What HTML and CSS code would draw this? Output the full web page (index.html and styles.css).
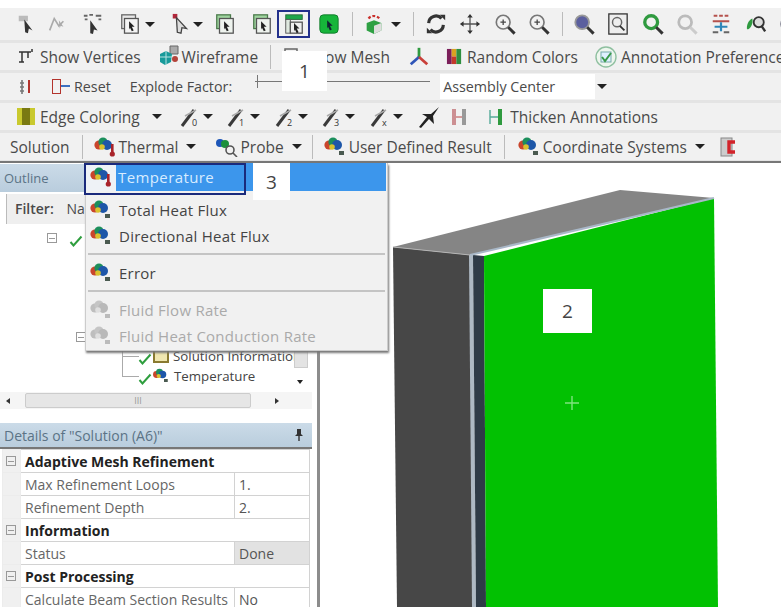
FILE: index.html
```html
<!DOCTYPE html>
<html lang="en">
<head>
  <meta charset="UTF-8">
  <title>Mechanical – Solution</title>
  <link rel="stylesheet" href="styles.css">
</head>
<body>

  <svg class="defs" width="0" height="0">
    <defs>
      <symbol id="i-solid" viewBox="0 0 24 24">
        <rect x="3" y="2" width="15" height="15" fill="#e8e8e8" stroke="#666" stroke-width="1.4"/>
        <rect x="6" y="6" width="15" height="16" fill="#f4f4f4" stroke="#555" stroke-width="1.4"/>
        <path d="M11 9l6 6h-3l2 4-2 1-2-4-1 2z" fill="#222"/>
      </symbol>
      <symbol id="i-solid-g" viewBox="0 0 24 24">
        <rect x="3" y="2" width="15" height="15" fill="#9fd39f" stroke="#4a7a4a" stroke-width="1.4"/>
        <rect x="6" y="6" width="15" height="16" fill="#eef3ee" stroke="#555" stroke-width="1.4"/>
        <path d="M11 9l6 6h-3l2 4-2 1-2-4-1 2z" fill="#222"/>
      </symbol>
      <symbol id="i-solid-top" viewBox="0 0 24 24">
        <rect x="3" y="2" width="18" height="5" fill="#1fa64a" stroke="#2a6a3a"/>
        <rect x="3" y="7" width="5" height="15" fill="#dfe8df" stroke="#555"/>
        <rect x="8" y="10" width="13" height="12" fill="#eee" stroke="#555" stroke-width="1.4"/>
        <path d="M12 11l6 6h-3l2 4-2 1-2-4-1 2z" fill="#222"/>
      </symbol>
      <symbol id="i-solid-full" viewBox="0 0 24 24">
        <rect x="2" y="2" width="20" height="20" rx="4" fill="#16b53a" stroke="#0f7a2a"/>
        <path d="M10 8l6 6h-3l2 4-2 1-2-4-1 2z" fill="#123"/>
      </symbol>
      <symbol id="i-lens" viewBox="0 0 24 24">
        <circle cx="10" cy="10" r="7.500" fill="#f2f2f2" stroke="#777" stroke-width="1.800"/>
        <path d="M15.500 15.500l7 7" stroke="#333" stroke-width="3.200"/>
        <path d="M7 10h6M10 7v6" stroke="#444" stroke-width="1.400"/>
      </symbol>
      <symbol id="i-sol" viewBox="0 0 24 20">
        <circle cx="6" cy="8" r="4.600" fill="#c9452c"/>
        <circle cx="10" cy="5" r="4.600" fill="#1c8f5c"/>
        <circle cx="14" cy="8" r="5" fill="#1d56a8"/>
        <circle cx="9" cy="10" r="2.800" fill="#d9c22f"/>
        <rect x="16" y="14" width="5" height="4" fill="#4a5a50"/>
      </symbol>
      <symbol id="i-therm" viewBox="0 0 24 20">
        <circle cx="6" cy="8" r="4.600" fill="#c9452c"/>
        <circle cx="10" cy="5" r="4.600" fill="#1c8f5c"/>
        <circle cx="14" cy="8" r="5" fill="#1d56a8"/>
        <circle cx="9" cy="10" r="2.800" fill="#d9c22f"/>
        <rect x="18" y="7" width="2.600" height="10" fill="#a8232a"/>
        <circle cx="19.300" cy="17" r="2.600" fill="#a8232a"/>
      </symbol>
      <symbol id="i-edge" viewBox="0 0 22 22">
        <path d="M2 20L14 4" stroke="#3a3a3a" stroke-width="3"/>
        <path d="M5 10l11-6" stroke="#aaa" stroke-width="1.600"/>
      </symbol>
      <symbol id="i-check" viewBox="0 0 14 12">
        <path d="M1.500 7l3 3.500L12.500 1.500" fill="none" stroke="#2e9e3e" stroke-width="2"/>
      </symbol>
    </defs>
  </svg>

  <div class="toolbars">

    <div class="bar bar-icons">
      <svg class="ico" viewBox="0 0 24 24"><path d="M3 3h10v6H3z" fill="#bbb"/><path d="M9 7l9 12-4-2-1 5-3-1z" fill="#333"/></svg>
      <svg class="ico ml8" viewBox="0 0 24 24"><path d="M4 19L9 6l5 8 5-5" fill="none" stroke="#aaa" stroke-width="1.800"/><path d="M14 8l5 7-3-1-1 3z" fill="#aaa"/></svg>
      <svg class="ico ml14" viewBox="0 0 24 24"><path d="M2 3h4M8 2h4M15 3h6M3 7h3M18 7h3" stroke="#666" stroke-width="2"/><path d="M9 8l8 11-4-1-1 5-3-1z" fill="#333"/></svg>
      <svg class="ico ml15"><use href="#i-solid"/></svg>
      <span class="arrow ml4"></span>
      <svg class="ico ml15" viewBox="0 0 24 24"><rect x="3" y="1" width="5" height="5" fill="#b3263a"/><path d="M7 5l11 12-5-1-1 6-4-1z" fill="#ddd" stroke="#444" stroke-width="1.400"/></svg>
      <span class="arrow ml1"></span>
      <svg class="ico ml11"><use href="#i-solid-g"/></svg>
      <svg class="ico ml15"><use href="#i-solid-g"/></svg>
      <span class="cell-on ml4"><svg class="ico"><use href="#i-solid-top"/></svg></span>
      <svg class="ico ml8"><use href="#i-solid-full"/></svg>
      <span class="sep ml10"></span>
      <svg class="ico ml10" viewBox="0 0 24 24"><path d="M6 6a8 8 0 0 1 12 0" fill="none" stroke="#c9302c" stroke-width="2.400" stroke-dasharray="3 2"/><path d="M4 11l8-3 8 3v8l-8 4-8-4z" fill="#2ea043"/><path d="M12 14l8-3v8l-8 4z" fill="#ddd"/></svg>
      <span class="arrow ml6"></span>
      <span class="sep ml9"></span>
      <svg class="ico ml11" viewBox="0 0 24 24"><path d="M4 11a8 8 0 0 1 14-5M20 13a8 8 0 0 1-14 5" fill="none" stroke="#333" stroke-width="3.400"/><path d="M16 2h6v6zM8 22H2v-6z" fill="#333"/></svg>
      <svg class="ico ml12" viewBox="0 0 24 24"><path d="M12 3v18M3 12h18" stroke="#555" stroke-width="1.400"/><path d="M12 1l3 4H9zM12 23l3-4H9zM1 12l4-3v6zM23 12l-4-3v6z" fill="#333"/></svg>
      <svg class="ico ml13"><use href="#i-lens"/></svg>
      <svg class="ico ml12"><use href="#i-lens"/></svg>
      <span class="sep ml11"></span>
      <svg class="ico ml10" viewBox="0 0 24 24"><circle cx="10" cy="10" r="7.500" fill="#5b5f9e" stroke="#999" stroke-width="2"/><path d="M15.500 15.500l7 7" stroke="#333" stroke-width="3.200"/></svg>
      <svg class="ico ml12" viewBox="0 0 24 24"><rect x="2" y="1" width="20" height="22" fill="#eee" stroke="#333" stroke-width="1.400"/><circle cx="11" cy="10" r="5" fill="none" stroke="#666" stroke-width="1.600"/><path d="M14 14l5 5" stroke="#333" stroke-width="2"/></svg>
      <svg class="ico ml13" viewBox="0 0 24 24"><circle cx="10" cy="10" r="7" fill="none" stroke="#2f9a3f" stroke-width="3.600"/><path d="M15.500 15.500l7 7" stroke="#333" stroke-width="3.200"/></svg>
      <svg class="ico ml12" viewBox="0 0 24 24"><circle cx="10" cy="10" r="7" fill="none" stroke="#bbb" stroke-width="3"/><path d="M15.500 15.500l7 7" stroke="#ccc" stroke-width="3.200"/></svg>
      <svg class="ico ml12" viewBox="0 0 24 24"><path d="M4 3h4M10 3h4M16 3h4M3 9h18" stroke="#b5514c" stroke-width="2"/><path d="M12 10v10M5 15h14" stroke="#2f86b8" stroke-width="2.400"/><path d="M3 21h6M15 21h6" stroke="#666" stroke-width="2"/></svg>
      <svg class="ico ml13" viewBox="0 0 24 24"><path d="M2 17c0-6 3-10 6-11 1 5-1 10-5 12z" fill="#2f9a3f"/><circle cx="15" cy="10" r="5.500" fill="#ddd" stroke="#333" stroke-width="2"/><path d="M18 14l4 6" stroke="#333" stroke-width="2.600"/></svg>
      <svg class="ico ml11" viewBox="0 0 24 24"><circle cx="12" cy="12" r="9" fill="#b6c3cf" stroke="#667"/></svg>
    </div>

    <div class="bar">
      <svg class="ico-sm" viewBox="0 0 18 18"><path d="M2 4h12M5 4v10M2 14h5M11 4v6M15 1v3" fill="none" stroke="#333" stroke-width="1.500"/></svg>
      <span class="lbl">Show Vertices</span>
      <svg class="ico ico-wire" viewBox="0 0 24 24"><path d="M13 1h8v8h-8z" fill="#aaa" stroke="#666"/><path d="M3 9l6-3 6 3-1 8-6 3-5-3z" fill="#179a9a"/><path d="M9 6v14M3 12h12" stroke="#b9e2e2"/><circle cx="18" cy="14" r="3" fill="#b3433a"/></svg>
      <span class="lbl">Wireframe</span>
      <span class="sep"></span>
      <svg class="ico-mesh" viewBox="0 0 20 20"><path d="M2 2h12v14H2zM6 6h12v12H6z" fill="none" stroke="#666" stroke-width="1.500"/></svg>
      <span class="lbl">Show Mesh</span>
      <svg class="ico ico-axes" viewBox="0 0 24 24"><path d="M12 2v10" stroke="#2f9a3f" stroke-width="3"/><path d="M12 12L3 20" stroke="#2f55b8" stroke-width="3"/><path d="M12 12l9 8" stroke="#c9403a" stroke-width="3"/></svg>
      <svg class="ico-colors" viewBox="0 0 18 18"><rect x="1" y="1" width="5" height="16" fill="#7b1f5a"/><rect x="6" y="1" width="5" height="8" fill="#d9a321"/><rect x="6" y="9" width="5" height="8" fill="#c43a2a"/><rect x="11" y="1" width="5" height="16" fill="#2f8f3f"/></svg>
      <span class="lbl">Random Colors</span>
      <svg class="ico ico-wire ico-note" viewBox="0 0 24 24"><circle cx="12" cy="12" r="10" fill="#eef6ee" stroke="#8fc0a0" stroke-width="1.400"/><rect x="7" y="7" width="10" height="10" fill="#dff0ff" stroke="#7aa"/><path d="M8 12l3 4 6-8" fill="none" stroke="#3a9a4a" stroke-width="2"/></svg>
      <span class="lbl">Annotation Preferences</span>
    </div>

    <div class="bar">
      <svg class="ico-sm" viewBox="0 0 18 18"><path d="M5 2v14M3 5h4M3 9h4M3 13h4" stroke="#777" stroke-width="1.600"/><path d="M12 2v13" stroke="#b3332c" stroke-width="2"/></svg>
      <span class="reset-ico"></span>
      <span class="lbl lbl-small lbl-reset">Reset</span>
      <span class="lbl lbl-small lbl-factor">Explode Factor:</span>
      <span class="slider"></span>
      <span class="combo">Assembly Center</span>
      <span class="arrow arrow-combo"></span>
    </div>

    <div class="bar">
      <span class="swatch"><i></i></span>
      <span class="lbl">Edge Coloring</span>
      <span class="arrow arrow-edge"></span>
      <svg class="ico-edge" viewBox="0 0 22 22"><use href="#i-edge"/><text class="edge-n" x="12" y="20">0</text></svg><span class="arrow arrow-n"></span>
      <svg class="ico-edge" viewBox="0 0 22 22"><use href="#i-edge"/><text class="edge-n" x="12" y="20">1</text></svg><span class="arrow arrow-n"></span>
      <svg class="ico-edge" viewBox="0 0 22 22"><use href="#i-edge"/><text class="edge-n" x="12" y="20">2</text></svg><span class="arrow arrow-n"></span>
      <svg class="ico-edge" viewBox="0 0 22 22"><use href="#i-edge"/><text class="edge-n" x="12" y="20">3</text></svg><span class="arrow arrow-n"></span>
      <svg class="ico-edge" viewBox="0 0 22 22"><use href="#i-edge"/><text class="edge-n" x="12" y="20">x</text></svg><span class="arrow arrow-n"></span>
      <svg class="ico-plane" viewBox="0 0 22 22"><path d="M1 21l8-10-5-3h9l8-7-6 9 1 8-5-5-8 9z" fill="#222"/></svg>
      <svg class="ico-h" viewBox="0 0 16 20"><rect x="1" y="2" width="4" height="16" fill="#cc8f92"/><path d="M5 10h6" stroke="#b44"/><rect x="11" y="2" width="4" height="16" fill="#999"/></svg>
      <svg class="ico-h ico-h2" viewBox="0 0 16 20"><path d="M2 3v14M2 10h8" stroke="#5a9" stroke-width="1.400"/><rect x="10" y="2" width="4" height="16" fill="#2f9a3f"/></svg>
      <span class="lbl lbl-thick">Thicken Annotations</span>
    </div>

    <div class="bar bar-solution">
      <span class="lbl">Solution</span>
      <span class="sep sep-first"></span>
      <svg class="ico-sol"><use href="#i-therm"/></svg>
      <span class="lbl">Thermal</span>
      <span class="arrow arrow-lbl"></span>
      <svg class="ico-sol ml18" viewBox="0 0 24 20"><circle cx="6" cy="6" r="4" fill="#1d56b8"/><circle cx="11" cy="7" r="4" fill="#1c8f3c"/><circle cx="16" cy="13" r="4" fill="none" stroke="#555" stroke-width="1.600"/><path d="M19 16l4 4" stroke="#555" stroke-width="1.600"/></svg>
      <span class="lbl">Probe</span>
      <span class="arrow arrow-lbl"></span>
      <span class="sep sep-tight"></span>
      <svg class="ico-sol"><use href="#i-sol"/></svg>
      <span class="lbl">User Defined Result</span>
      <span class="sep"></span>
      <svg class="ico-sol"><use href="#i-sol"/></svg>
      <span class="lbl">Coordinate Systems</span>
      <span class="arrow arrow-lbl"></span>
      <svg class="ico-del" viewBox="0 0 18 20"><rect x="1" y="1" width="11" height="18" fill="#ccc" stroke="#888"/><path d="M15 5H9v10h6" fill="none" stroke="#d2232a" stroke-width="3.400"/></svg>
    </div>

    <span class="badge badge-1">1</span>
  </div>

  <div class="main">
    <aside class="side">
      <div class="pane-title">Outline</div>
      <div class="filter"><span class="filter-lbl">Filter:</span> Name</div>
      <div class="tree">
        <div class="tree-row tree-root">
          <span class="minus"></span>
          <svg class="check"><use href="#i-check"/></svg>
        </div>
        <div class="tree-row tree-sol"><span class="minus"></span></div>
        <div class="tree-row tree-leaf">
          <svg class="check"><use href="#i-check"/></svg>
          <span class="leaf-info"></span>
          <span>Solution Information</span>
        </div>
        <div class="tree-row tree-leaf">
          <svg class="check"><use href="#i-check"/></svg>
          <svg class="leaf-ico"><use href="#i-sol"/></svg>
          <span>Temperature</span>
        </div>
        <div class="vscroll"><span class="vthumb"></span><span class="arrow arrow-down"></span></div>
      </div>
      <div class="hscroll">
        <span class="tri tri-l"></span>
        <span class="hthumb">III</span>
        <span class="tri tri-r"></span>
      </div>

      <div class="pane-title pane-details">
        <span>Details of "Solution (A6)"</span>
        <svg class="pin" viewBox="0 0 10 14"><path d="M3 1h4v5l2 2H1l2-2zM4.300 8h1.400v5H4.300z" fill="#333"/></svg>
      </div>
      <table class="props">
        <colgroup><col class="col-gut"><col><col class="col-val"></colgroup>
        <tr class="group"><td class="gut"><span class="minus"></span></td><td colspan="2">Adaptive Mesh Refinement</td></tr>
        <tr><td class="gut"></td><td>Max Refinement Loops</td><td class="val">1.</td></tr>
        <tr><td class="gut"></td><td>Refinement Depth</td><td class="val">2.</td></tr>
        <tr class="group"><td class="gut"><span class="minus"></span></td><td colspan="2">Information</td></tr>
        <tr><td class="gut"></td><td>Status</td><td class="val val-ro">Done</td></tr>
        <tr class="group"><td class="gut"><span class="minus"></span></td><td colspan="2">Post Processing</td></tr>
        <tr><td class="gut"></td><td>Calculate Beam Section Results</td><td class="val">No</td></tr>
      </table>
    </aside>

    <div class="view">
      <!-- part in isometric view, face picked in green -->
      <svg class="model" viewBox="320 163 461 444">
        <polygon points="393,247 620,190 714,198 470,255" fill="#858585"/>
        <polygon points="393,247 470,255 473,607 397,607" fill="#474747"/>
        <polygon points="469,255 473,255 476,607 472,607" fill="#aeb9c4"/>
        <polygon points="473,255 484,256 486,607 476,607" fill="#2f3b47"/>
        <polygon points="484,256 714,198 718,607 486,607" fill="#02c102"/>
        <path d="M470 255L714 198" stroke="#a9b8c8" stroke-width="2"/>
        <path d="M393 247L470 255" stroke="#b5b5b5"/>
        <path d="M572 396v14M565 403h14" stroke="#7fe37f" stroke-width="1.400"/>
      </svg>
      <span class="badge badge-2">2</span>
    </div>

    <div class="menu">
      <div class="menu-item menu-on">
        <span class="menu-ico"><svg class="mi"><use href="#i-therm"/></svg></span>
        <span class="menu-text">Temperature</span>
        <span class="badge badge-3">3</span>
      </div>
      <div class="menu-list">
        <div class="menu-item"><span class="menu-ico"><svg class="mi"><use href="#i-sol"/></svg></span><span class="menu-text">Total Heat Flux</span></div>
        <div class="menu-item"><span class="menu-ico"><svg class="mi"><use href="#i-sol"/></svg></span><span class="menu-text">Directional Heat Flux</span></div>
        <div class="menu-sep"></div>
        <div class="menu-item"><span class="menu-ico"><svg class="mi"><use href="#i-sol"/></svg></span><span class="menu-text">Error</span></div>
        <div class="menu-sep"></div>
        <div class="menu-item off"><span class="menu-ico"><svg class="mi"><use href="#i-sol"/></svg></span><span class="menu-text">Fluid Flow Rate</span></div>
        <div class="menu-item off"><span class="menu-ico"><svg class="mi"><use href="#i-sol"/></svg></span><span class="menu-text">Fluid Heat Conduction Rate</span></div>
      </div>
    </div>
  </div>

</body>
</html>
```

FILE: styles.css
```css
* {
  box-sizing: border-box;
}
html, body {
  margin: 0;
  height: 100%;
}
body {
  width: 781px;
  height: 607px;
  overflow: hidden;
  background: #fff;
  color: #4a4a4a;
  font-family: 'Open Sans', 'Noto Sans', sans-serif;
  font-size: 15.500px;
  padding-top: 8px;
}
.defs {
  position: absolute;
}

/* spacing steps for the icon strip */
.ml1 { margin-left: 1px; }
.ml4 { margin-left: 4px; }
.ml6 { margin-left: 6px; }
.ml8 { margin-left: 8px; }
.ml9 { margin-left: 9px; }
.ml10 { margin-left: 10px; }
.ml11 { margin-left: 11px; }
.ml12 { margin-left: 12px; }
.ml13 { margin-left: 13px; }
.ml14 { margin-left: 14px; }
.ml15 { margin-left: 15px; }
.ml18 { margin-left: 18px; }

/* toolbars */
.toolbars {
  position: relative;
  display: flex;
  flex-direction: column;
  gap: 3px;
  height: 155px;
  border-bottom: 2px solid #777;
  background: #e4e4e4;
}
.bar {
  display: flex;
  align-items: center;
  height: 27px;
  flex: none;
  padding-left: 17px;
  background: #f1f1f1;
  white-space: nowrap;
  overflow: hidden;
}
.bar-icons {
  height: 32px;
  padding-left: 16px;
}
.bar-solution {
  padding-left: 10px;
}
.cell-on {
  display: flex;
  justify-content: center;
  align-items: center;
  width: 33px;
  height: 28px;
  flex: none;
  border: 2px solid #23308c;
}
.ico {
  width: 22px;
  height: 22px;
  flex: none;
}
.ico-sm {
  width: 18px;
  height: 18px;
  margin-right: 5px;
  flex: none;
}
.ico-wire {
  width: 24px;
  height: 24px;
  margin-left: 16px;
  margin-right: 1px;
}
.ico-note {
  margin-right: 3px;
}
.ico-mesh {
  width: 20px;
  height: 20px;
  margin-right: 4px;
  flex: none;
}
.ico-axes {
  margin-left: 18px;
}
.ico-colors {
  width: 17px;
  height: 17px;
  margin-left: 16px;
  margin-right: 4px;
  flex: none;
}
.ico-edge {
  width: 22px;
  height: 22px;
  margin-left: 12px;
  flex: none;
  overflow: visible;
}
.edge-n {
  font-size: 9px;
  fill: #333;
}
.ico-plane {
  width: 22px;
  height: 22px;
  margin-left: 13px;
  flex: none;
}
.ico-h {
  width: 16px;
  height: 20px;
  margin-left: 11px;
  flex: none;
}
.ico-h2 {
  margin-left: 21px;
}
.ico-sol {
  width: 24px;
  height: 20px;
  margin-right: 2px;
  flex: none;
}
.ico-del {
  width: 18px;
  height: 20px;
  margin-left: 15px;
  flex: none;
}
.sep {
  width: 1px;
  height: 24px;
  margin: 0 12px;
  background: #bbb;
  flex: none;
}
.bar-icons .sep {
  margin-right: 0;
}
.sep-first {
  margin-right: 10px;
}
.sep-tight {
  margin: 0 10px;
}
.arrow {
  width: 0;
  height: 0;
  flex: none;
  border-left: 5px solid transparent;
  border-right: 5px solid transparent;
  border-top: 5px solid #222;
}
.arrow-n {
  margin: 0 2.500px 0 1px;
}
.arrow-edge {
  margin-left: 12px;
  margin-right: 6px;
}
.arrow-lbl {
  margin-left: 8px;
}
.arrow-combo {
  margin-left: 2px;
}
.lbl {
  flex: none;
  line-height: 20px;
}
.lbl-small {
  font-size: 14.300px;
}
.lbl-thick {
  margin-left: 6px;
}
.reset-ico {
  width: 9px;
  height: 15px;
  margin-left: 12px;
  border: 1.500px solid #b3332c;
  position: relative;
  flex: none;
}
.reset-ico::after {
  content: '';
  position: absolute;
  left: 8px;
  top: 5px;
  width: 9px;
  height: 2px;
  background: #3a6fc0;
}
.lbl-reset {
  margin-left: 13px;
}
.lbl-factor {
  margin-left: 19px;
}
.slider {
  position: relative;
  width: 175px;
  height: 1px;
  margin: 0 0 10px 23px;
  background: #777;
  flex: none;
}
.slider::before {
  content: '';
  position: absolute;
  left: 2px;
  top: -6px;
  width: 1px;
  height: 13px;
  background: #777;
}
.combo {
  width: 155px;
  height: 25px;
  margin-left: 10px;
  padding-left: 3px;
  font-size: 14.300px;
  line-height: 25px;
  background: #fff;
  flex: none;
}
.swatch {
  width: 18px;
  height: 17px;
  margin-right: 5px;
  background: #c9c92e;
  display: flex;
  justify-content: center;
  flex: none;
}
.swatch i {
  width: 8px;
  background: #7a7a12;
}
.badge {
  position: absolute;
  display: flex;
  justify-content: center;
  align-items: center;
  background: #fff;
  color: #444;
  font-size: 19px;
  font-weight: 400;
}
.badge-1 {
  left: 282px;
  top: 43px;
  width: 45px;
  height: 40px;
}

/* main area under the toolbars */
.main {
  position: relative;
  display: flex;
  height: 444px;
}
.side {
  width: 320px;
  flex: none;
  border-right: 3px solid #8c8c8c;
  padding: 1px 5px 0 0;
}
.pane-title {
  display: flex;
  justify-content: space-between;
  align-items: center;
  height: 28px;
  padding: 0 8px 0 4px;
  color: #5b7386;
  background: linear-gradient(#cbdbe8, #b9cddd);
  font-size: 13px;
}
.filter {
  width: 100px;
  height: 30px;
  margin: 2px 0 0 6px;
  padding: 5px 5px 0 8px;
  border-left: 1px solid #bbb;
  background: #efefef;
  font-size: 14px;
  white-space: nowrap;
}
.filter-lbl {
  font-weight: 600;
  margin-right: 9px;
}
.tree {
  position: relative;
  height: 168px;
  font-size: 13.300px;
}
.tree-row {
  position: absolute;
  display: flex;
  align-items: center;
  gap: 4px;
  height: 20px;
  color: #444;
}
.tree-root {
  left: 47px;
  top: 4px;
  gap: 12px;
}
.tree-sol {
  left: 76px;
  top: 103px;
}
.tree-leaf {
  left: 138px;
}
.tree-leaf:nth-child(3) {
  top: 122px;
}
.tree-leaf:nth-child(4) {
  top: 142px;
}
.tree-leaf:nth-child(3)::before,
.tree-leaf:nth-child(4)::before {
  content: '';
  position: absolute;
  left: -16px;
  top: -10px;
  width: 16px;
  height: 20px;
  border-left: 1px solid #aaa;
  border-bottom: 1px solid #aaa;
}
.check {
  width: 14px;
  height: 12px;
  margin-top: 6px;
  flex: none;
}
.leaf-info {
  width: 16px;
  height: 14px;
  background: #f0e7b0;
  border: 2px solid #8a7a30;
  margin-left: -3px;
}
.leaf-ico {
  width: 18px;
  height: 16px;
  margin-left: -4px;
}
.minus {
  display: block;
  width: 10px;
  height: 10px;
  flex: none;
  border: 1px solid #999;
  background: linear-gradient(#999, #999) center / 6px 1px no-repeat;
}
.vscroll {
  position: absolute;
  top: 0;
  right: 3px;
  width: 16px;
  height: 100%;
}
.vthumb {
  position: absolute;
  left: 1px;
  top: 120px;
  width: 14px;
  height: 24px;
  background: #e3e3e3;
  border: 1px solid #ccc;
}
.arrow-down {
  position: absolute;
  left: 4px;
  bottom: 8px;
  border-left-width: 3px;
  border-right-width: 3px;
  border-top-width: 4px;
}
.hscroll {
  display: flex;
  align-items: center;
  height: 17px;
  margin-bottom: 14px;
  padding: 0 6px;
  gap: 15px;
  background: #f5f5f5;
}
.hthumb {
  width: 226px;
  height: 15px;
  color: #999;
  font-size: 9px;
  line-height: 14px;
  text-align: center;
  background: #e6e6e6;
  border: 1px solid #ccc;
  border-radius: 2px;
}
.tri {
  width: 0;
  height: 0;
  flex: none;
  border-top: 3px solid transparent;
  border-bottom: 3px solid transparent;
}
.tri-l {
  border-right: 4px solid #333;
}
.tri-r {
  margin-left: 9px;
  border-left: 4px solid #333;
}
.pane-details {
  height: 26px;
  font-size: 14px;
  border-bottom: 2px solid #777;
}
.pin {
  width: 10px;
  height: 14px;
}

/* details table */
.props {
  width: 308px;
  margin-left: 2px;
  border-collapse: collapse;
  table-layout: fixed;
  font-size: 14px;
}
.col-gut {
  width: 18px;
}
.col-val {
  width: 75px;
}
.props td {
  height: 23px;
  padding: 0 4px;
  border: 1px solid #d2d2d2;
  color: #666;
  white-space: nowrap;
  overflow: hidden;
}
.props .gut {
  padding: 0 3px;
  border-color: #ececec;
  background: #f0f0f0;
}
.props .val {
  color: #555;
}
.props .val-ro {
  background: #e2e2e2;
}
.props .group td {
  color: #222;
  font-weight: 700;
}

/* model view */
.view {
  position: relative;
  flex: 1;
}
.model {
  display: block;
  position: absolute;
  left: 0;
  top: 0;
  width: 461px;
  height: 444px;
}
.badge-2 {
  left: 223px;
  top: 126px;
  width: 49px;
  height: 44px;
}

/* context menu */
.menu {
  position: absolute;
  left: 85px;
  top: 0;
  width: 303px;
  height: 188px;
  background: #f1f1f1;
  box-shadow: 1px 2px 2px #777;
  border: 1px solid #ccc;
  border-top: 0;
}
.menu-item {
  display: flex;
  align-items: center;
  height: 26px;
  color: #444;
}
.menu-ico {
  width: 30px;
  margin-right: 3px;
  display: flex;
  justify-content: center;
  flex: none;
}
.mi {
  width: 24px;
  height: 20px;
}
.menu-text {
  font-size: 15px;
  font-weight: 500;
  letter-spacing: .25px;
}
.menu-on {
  position: relative;
  height: 28px;
  width: 300px;
  background: #3c96ec;
  color: #d8ecff;
}
.menu-on .menu-ico {
  height: 28px;
  margin-right: 2px;
  align-items: center;
  background: #eef2f6;
}
.menu-on .menu-text {
  font-weight: 400;
  letter-spacing: .4px;
}
.menu-on::after {
  content: '';
  position: absolute;
  left: -2px;
  top: 0;
  width: 158px;
  height: 28px;
  border: 2px solid #1a2a7c;
}
.badge-3 {
  left: 167px;
  top: 0;
  width: 37px;
  height: 37px;
}
.menu-list {
  display: flex;
  flex-direction: column;
  padding-top: 6px;
}
.menu-sep {
  height: 2px;
  flex: none;
  margin: 4px 2px 5px 2px;
  background: #c4c4c4;
}
.off {
  color: #aaa;
}
.off .mi {
  filter: grayscale(1) opacity(.35);
}
```
